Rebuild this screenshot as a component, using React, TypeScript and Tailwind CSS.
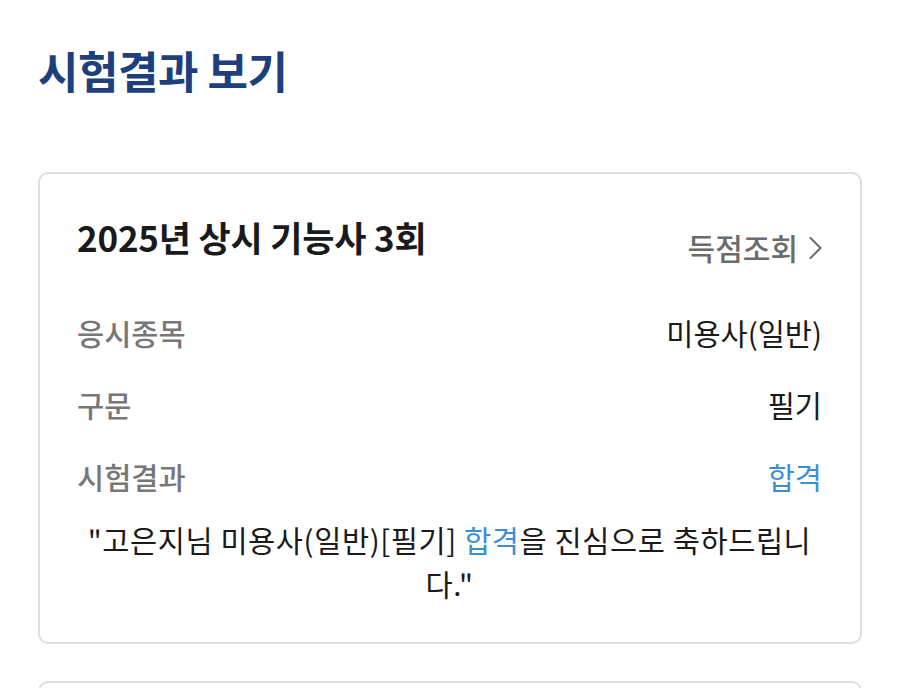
const font = { fontFamily: '"Noto Sans CJK KR", "Noto Sans", sans-serif' };

type Row = { label: string; value: string; highlight?: boolean };

const rows: Row[] = [
  { label: "응시종목", value: "미용사(일반)" },
  { label: "구문", value: "필기" },
  { label: "시험결과", value: "합격", highlight: true },
];

export default function App() {
  return (
    <div className="min-h-screen overflow-hidden bg-white px-[38px] pt-[40px]" style={font}>
      <h1 className="text-[44px] font-bold leading-[60px] tracking-[-0.5px] text-[#1d3f7e]">
        시험결과 보기
      </h1>

      <section className="mt-[72px] rounded-[10px] border-2 border-[#dedede] pl-[37px] pr-[38px] pt-[41px] pb-[37px]">
        <div className="flex items-start justify-between">
          <h2 className="text-[35px] font-bold leading-[44px] tracking-[-0.2px] text-[#1a1a1a]">
            2025년 상시 기능사 3회
          </h2>
          <button className="mt-[12px] flex items-center gap-[11px] text-[30px] font-medium leading-[40px] text-[#6b6b6b]">
            득점조회
            <svg width="13" height="24" viewBox="0 0 13 24" fill="none" className="mt-[2px]">
              <path d="M1.5 2l10 10-10 10" stroke="#6b6b6b" strokeWidth="2" strokeLinecap="round" strokeLinejoin="round" />
            </svg>
          </button>
        </div>

        <dl className="mt-[29px]">
          {rows.map((row) => (
            <div key={row.label} className="flex h-[72px] items-center justify-between">
              <dt className="text-[29.5px] font-medium text-[#777777]">{row.label}</dt>
              <dd className={row.highlight ? "text-[29.5px] text-[#3b8ed4]" : "text-[29.5px] text-[#1a1a1a]"}>
                {row.value}
              </dd>
            </div>
          ))}
        </dl>

        <p className="mt-[5px] break-all px-[6px] text-center text-[29.5px] leading-[44px] tracking-[0.6px] text-[#1a1a1a]">
          "고은지님 미용사(일반)[필기] <span className="text-[#3b8ed4]">합격</span>을 진심으로 축하드립니다."
        </p>
      </section>

      <section className="mt-[37px] h-[80px] rounded-[10px] border-2 border-[#dedede]" />
    </div>
  );
}
